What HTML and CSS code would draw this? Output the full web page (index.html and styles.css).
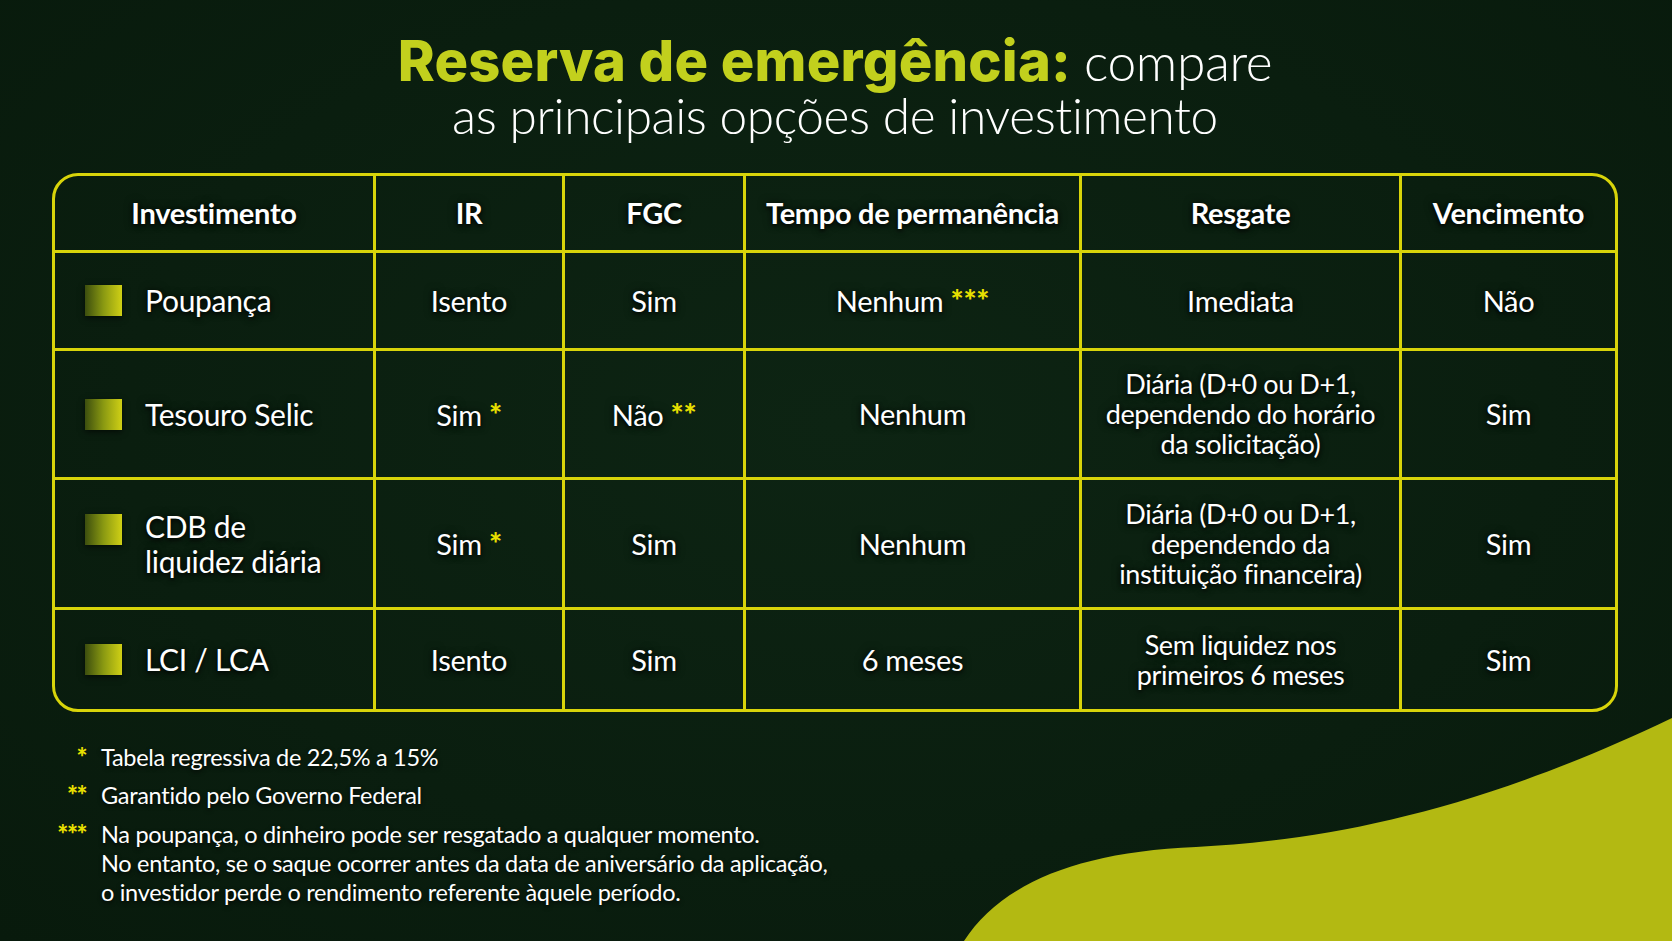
FILE: index.html
```html
<!DOCTYPE html>
<html lang="pt-BR">
<head>
<meta charset="utf-8">
<title>Reserva de emergência</title>
<link rel="stylesheet" href="styles.css">
</head>
<body>
<div class="page">
  <svg class="blob" width="1672" height="941" viewBox="0 0 1672 941" aria-hidden="true">
    <path d="M964 941 C1000 885 1075 852 1196 847 C1330 840 1480 810 1672 718 L1672 941 Z" fill="#b3b912"/>
  </svg>

  <header class="title">
    <h1><span class="title-hl">Reserva de emergência:</span> <span class="title-word">compare</span><br>as principais opções de investimento</h1>
  </header>

  <div class="grid">
    <div class="cell head"><span>Investimento</span></div>
    <div class="cell head"><span>IR</span></div>
    <div class="cell head"><span>FGC</span></div>
    <div class="cell head"><span>Tempo de permanência</span></div>
    <div class="cell head"><span>Resgate</span></div>
    <div class="cell head last-col"><span>Vencimento</span></div>

    <div class="cell name"><span class="swatch"></span><span class="name-text">Poupança</span></div>
    <div class="cell"><span>Isento</span></div>
    <div class="cell"><span>Sim</span></div>
    <div class="cell"><span>Nenhum <span class="ast">***</span></span></div>
    <div class="cell"><span>Imediata</span></div>
    <div class="cell last-col"><span>Não</span></div>

    <div class="cell name"><span class="swatch"></span><span class="name-text">Tesouro Selic</span></div>
    <div class="cell"><span>Sim <span class="ast">*</span></span></div>
    <div class="cell"><span>Não <span class="ast">**</span></span></div>
    <div class="cell"><span>Nenhum</span></div>
    <div class="cell small"><span>Diária (D+0 ou D+1,<br>dependendo do horário<br>da solicitação)</span></div>
    <div class="cell last-col"><span>Sim</span></div>

    <div class="cell name two-line"><span class="swatch"></span><span class="name-text">CDB de<br>liquidez diária</span></div>
    <div class="cell"><span>Sim <span class="ast">*</span></span></div>
    <div class="cell"><span>Sim</span></div>
    <div class="cell"><span>Nenhum</span></div>
    <div class="cell small"><span>Diária (D+0 ou D+1,<br>dependendo da<br>instituição financeira)</span></div>
    <div class="cell last-col"><span>Sim</span></div>

    <div class="cell name last-row"><span class="swatch"></span><span class="name-text">LCI / LCA</span></div>
    <div class="cell last-row"><span>Isento</span></div>
    <div class="cell last-row"><span>Sim</span></div>
    <div class="cell last-row"><span>6 meses</span></div>
    <div class="cell small last-row"><span>Sem liquidez nos<br>primeiros 6 meses</span></div>
    <div class="cell last-col last-row"><span>Sim</span></div>
  </div>

  <ul class="notes">
    <li><span class="note-mark">*</span><span class="note-text">Tabela regressiva de 22,5% a 15%</span></li>
    <li><span class="note-mark">**</span><span class="note-text">Garantido pelo Governo Federal</span></li>
    <li><span class="note-mark">***</span><span class="note-text">Na poupança, o dinheiro pode ser resgatado a qualquer momento.<br>No entanto, se o saque ocorrer antes da data de aniversário da aplicação,<br>o investidor perde o rendimento referente àquele período.</span></li>
  </ul>
</div>
</body>
</html>
```

FILE: styles.css
```css
* { box-sizing: border-box; }

html, body {
  margin: 0;
  padding: 0;
}

body {
  background: #0b1f10;
  font-family: "Lato", "Open Sans", sans-serif;
  color: #ffffff;
}

.page {
  position: relative;
  width: 1672px;
  height: 941px;
  overflow: hidden;
  background: radial-gradient(ellipse at 50% 45%, #0d2413 0%, #0a1e0f 60%, #081a0c 100%);
  padding: 35px 0 0 52px;
}

.blob {
  position: absolute;
  left: 0;
  top: 0;
  z-index: 0;
}

.title {
  position: relative;
  z-index: 1;
  width: 1566px;
  text-align: center;
}

.title h1 {
  margin: 0;
  font-family: "Lato", sans-serif;
  font-weight: 300;
  font-size: 49.6px;
  line-height: 53px;
  letter-spacing: -0.4px;
  color: #ffffff;
}

.title-hl {
  font-family: "Inter", "Lato", sans-serif;
  font-weight: 800;
  font-size: 56px;
  color: #c2d01d;
  letter-spacing: 0.2px;
}

.title-word {
  font-size: 51.5px;
}

.grid {
  position: relative;
  z-index: 1;
  margin-top: 31px;
  width: 1566px;
  display: grid;
  grid-template-columns: 321px 189px 181px 336px 320px 1fr;
  grid-template-rows: 77px 98px 129px 130px 99px;
  border: 3px solid #d8d40a;
  border-radius: 26px;
  overflow: hidden;
}

.cell {
  display: flex;
  align-items: center;
  justify-content: center;
  text-align: center;
  border-right: 3px solid #d8d40a;
  border-bottom: 3px solid #d8d40a;
  font-size: 29px;
  line-height: 34px;
  font-weight: 400;
  letter-spacing: -0.3px;
  text-shadow: 0 2px 4px rgba(0, 0, 0, 0.85), 0 0 8px rgba(0, 0, 0, 0.6);
}

.cell.head {
  font-weight: 700;
  font-size: 29px;
  letter-spacing: -0.3px;
}

.cell.small {
  font-size: 27px;
  line-height: 30px;
  letter-spacing: -0.4px;
}

.cell.last-col { border-right: none; }
.cell.last-row { border-bottom: none; }

.cell.name {
  justify-content: flex-start;
  align-items: center;
  padding-left: 30px;
  text-align: left;
  font-size: 30px;
  line-height: 35px;
  gap: 23px;
}

.swatch {
  flex: 0 0 auto;
  align-self: center;
  width: 37px;
  height: 31px;
  background: linear-gradient(90deg, #3c4e0e 0%, #8a9912 50%, #d0d015 100%);
  box-shadow: 0 2px 6px rgba(0, 0, 0, 0.6);
}

.cell.name .name-text {
  display: block;
}

.cell.two-line .swatch {
  align-self: flex-start;
  margin-top: 34px;
}

.ast {
  color: #e6df00;
  font-weight: 900;
  font-size: 31px;
  text-shadow: none;
}

.notes {
  position: relative;
  z-index: 1;
  list-style: none;
  margin: 31px 0 0 0;
  padding: 0;
  display: flex;
  flex-direction: column;
  gap: 9px;
}

.notes li {
  display: flex;
  align-items: flex-start;
  font-size: 23.5px;
  line-height: 29.3px;
  text-shadow: 0 2px 4px rgba(0, 0, 0, 0.8);
}

.note-mark {
  flex: 0 0 34px;
  text-align: right;
  color: #e6df00;
  font-weight: 900;
  font-size: 26px;
  letter-spacing: -1.5px;
  text-shadow: none;
}

.note-text {
  margin-left: 15px;
  letter-spacing: -0.3px;
}
```
